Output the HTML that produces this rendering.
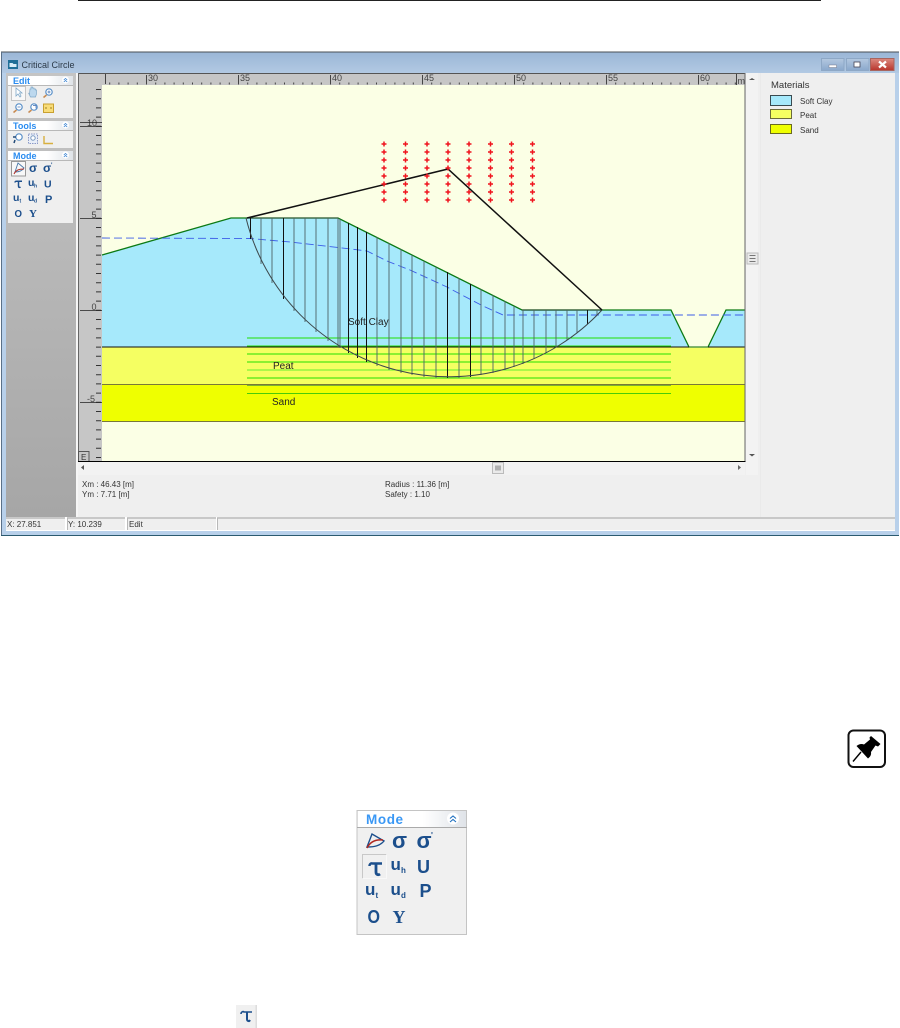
<!DOCTYPE html>
<html><head><meta charset="utf-8"><title>Critical Circle</title>
<style>
html,body{margin:0;padding:0;background:#fff;width:900px;height:1028px;overflow:hidden}
svg{display:block;font-family:"Liberation Sans",sans-serif}
.s{font-size:8px;fill:#333}
.r{font-size:9px;fill:#444}
.hd{font-weight:bold;font-size:9px;fill:#2a8cf0}
.g{font-weight:bold;fill:#1c4f8c}
.gb{font-weight:bold;fill:#1c4f8c;font-family:"Liberation Serif",serif}
</style></head><body>
<svg width="900" height="1028" viewBox="0 0 900 1028" xmlns="http://www.w3.org/2000/svg">
<defs>
<linearGradient id="tb" x1="0" y1="0" x2="0" y2="1"><stop offset="0" stop-color="#9ab6d6"/><stop offset="1" stop-color="#b2c9e3"/></linearGradient>
<linearGradient id="gp" x1="0" y1="0" x2="0" y2="1"><stop offset="0" stop-color="#c4c4c4"/><stop offset="1" stop-color="#a6a6a6"/></linearGradient>
<linearGradient id="hg" x1="0" y1="0" x2="1" y2="0"><stop offset="0" stop-color="#fff"/><stop offset=".6" stop-color="#fff"/><stop offset="1" stop-color="#dfe3e8"/></linearGradient>
<linearGradient id="cl" x1="0" y1="0" x2="0" y2="1"><stop offset="0" stop-color="#dc8a80"/><stop offset="1" stop-color="#b8352c"/></linearGradient>
<linearGradient id="bt" x1="0" y1="0" x2="0" y2="1"><stop offset="0" stop-color="#b4c8e0"/><stop offset="1" stop-color="#8aa8cc"/></linearGradient>
</defs>

<rect x="78" y="0" width="743" height="1" fill="#222"/>

<!-- window -->
<rect x="1" y="73" width="898" height="463" fill="#b8d0ea"/>
<rect x="1" y="52" width="898" height="21" fill="url(#tb)"/>
<rect x="1" y="51.500" width="898" height="1" fill="#4a4f55"/>
<rect x="1" y="52" width="1" height="484" fill="#5a7088"/>
<rect x="1" y="535" width="898" height="1" fill="#2a5a70"/>
<rect x="6" y="73" width="889" height="458" fill="#efefef"/>
<rect x="6" y="73" width="70" height="444" fill="url(#gp)"/>
<rect x="76" y="73" width="2" height="444" fill="#f6f6f6"/>

<!-- title -->
<rect x="8" y="60" width="10" height="9" fill="#1f6f98"/>
<path d="M9.500 63h3l1 1h3v3h-7z" fill="#d8eef8"/>
<text x="21.500" y="68" font-size="9" fill="#2c3a48">Critical Circle</text>
<rect x="821.500" y="58.500" width="22.500" height="12" fill="url(#bt)" stroke="#8ea8c6"/>
<rect x="829" y="65" width="7.500" height="2.500" fill="#fff" stroke="#667" stroke-width=".4"/>
<rect x="846.500" y="58.500" width="22.500" height="12" fill="url(#bt)" stroke="#8ea8c6"/>
<rect x="854" y="62" width="6" height="5" fill="#fff" stroke="#445" stroke-width=".8"/>
<rect x="870.500" y="58.500" width="23.500" height="12" fill="url(#cl)" stroke="#a8655f"/>
<path d="M879 61.500l7 6M886 61.500l-7 6" stroke="#fff" stroke-width="2.200"/>

<!-- canvas -->
<rect x="78" y="73" width="667" height="12" fill="#c6c6c6"/>
<rect x="78" y="85" width="24" height="376" fill="#c6c6c6"/>
<rect x="78" y="73" width="667" height="1" fill="#555"/>
<rect x="78" y="73" width="1" height="388" fill="#666"/>
<rect x="102" y="85" width="643" height="376" fill="#fbffe5"/>
<rect x="102" y="347" width="643" height="37.500" fill="#f5ff62"/>
<rect x="102" y="384.500" width="643" height="37" fill="#efff00"/>
<polygon points="102,255 231,218 338,218 522,310 671,310 689,347 708,347 726,310 745,310 745,347 102,347" fill="#a6e9fb"/>

<!-- rulers -->
<line x1="109" y1="83.500" x2="736" y2="83.500" stroke="#444" stroke-width="2" stroke-dasharray="1 8.2" stroke-dashoffset="-.2"/>
<line x1="98.500" y1="89" x2="98.500" y2="461" stroke="#333" stroke-width="5" stroke-dasharray="1 8.2"/>
<path d="M105.500 74v10M146.500 75v9M238.500 75v9M330.500 75v9M422.500 75v9M514.500 75v9M606.500 75v9M698.500 75v9M736.500 74v11" stroke="#444" stroke-width="1"/>
<g class="r">
<text x="148" y="81">30</text><text x="240" y="81">35</text><text x="332" y="81">40</text><text x="424" y="81">45</text><text x="516" y="81">50</text><text x="608" y="81">55</text><text x="700" y="81">60</text><text x="737.500" y="84">m</text>
<text x="87" y="126">10</text><text x="91.500" y="218">5</text><text x="91.500" y="310">0</text><text x="87" y="402">-5</text>
</g>
<path d="M80 122.500h22M80 126.500h22M80 218.500h22M80 310.500h22M80 402.500h22" stroke="#222" stroke-width=".8"/>
<rect x="78.500" y="451.500" width="10.500" height="10" fill="#c6c6c6" stroke="#555"/>
<text x="81" y="460" font-size="8" fill="#333">E</text>

<!-- green soil lines -->
<g stroke="#22e000" stroke-width="1.100">
<path d="M247 338H671M247 346H671M247 354H671M247 362H671M247 378H671"/>
<path d="M247 370H671" stroke="#62f030"/>
<path d="M247 385.500H671" stroke="#7ab030"/>
<path d="M247 393.500H671" stroke="#48cc08"/>
</g>

<!-- ground outline -->
<polyline points="102,255 231,218 338,218 522,310 671,310 689,347 708,347 726,310 745,310" fill="none" stroke="#0c7a14" stroke-width="1.300"/>
<path d="M247 218H338" stroke="#2a4a30" stroke-width="1"/>
<path d="M522 310H602" stroke="#1a3a20" stroke-width="1"/>
<path d="M102 347H689M708 347H745" stroke="#111" stroke-width=".9"/>
<path d="M689 347H708" stroke="#5a9a50" stroke-width="1.300"/>
<path d="M102 384.500H745M102 421.500H745" stroke="#787838" stroke-width=".9"/>

<!-- phreatic -->
<polyline points="102,238 250,238.500 290,242 340,247.700 367,251 387,261 410,270 447,287 460,294 483,306 503,315 745,315" fill="none" stroke="#3c5ce8" stroke-width=".9" stroke-dasharray="8 4"/>

<!-- slices -->
<g stroke="#4e6468" stroke-width=".9" fill="none">
<path d="M261 218V264M272 218V283M294 218V311M305 218V322M316 218V332M328 218V341M338 218V347M340 219V348M377 237V366M389 243V370M401 249V373M412 255V375M424 261V377M436 267V378M459 278V378M481 289V375M493 295V373M505 301V370M514 306V367M523 310V364M534 310V359M546 310V353M556 310V347M567 310V340M577 310V333M597 310V315"/>
</g>
<g stroke="#111" stroke-width="1" fill="none">
<path d="M250.500 218V239M283.500 218V299M348.500 223V353M357.500 227V358M366.500 232V362M447.500 272V378M470.500 284V377M587.500 310V324"/>
</g>
<path d="M246 218A209 209 0 0 0 602 310" fill="none" stroke="#3c484c" stroke-width="1"/>
<polyline points="247,218 448,169 602,310" fill="none" stroke="#111" stroke-width="1.500"/>

<!-- grid -->
<path stroke="#f0141e" stroke-width="1.500" fill="none" d="M384 141.500v5M381.500 144h5M384 149.500v5M381.500 152h5M384 157.500v5M381.500 160h5M384 165.500v5M381.500 168h5M384 173.500v5M381.500 176h5M384 181.500v5M381.500 184h5M384 189.500v5M381.500 192h5M384 197.500v5M381.500 200h5
M405.500 141.500v5M403 144h5M405.500 149.500v5M403 152h5M405.500 157.500v5M403 160h5M405.500 165.500v5M403 168h5M405.500 173.500v5M403 176h5M405.500 181.500v5M403 184h5M405.500 189.500v5M403 192h5M405.500 197.500v5M403 200h5
M427 141.500v5M424.500 144h5M427 149.500v5M424.500 152h5M427 157.500v5M424.500 160h5M427 165.500v5M424.500 168h5M427 173.500v5M424.500 176h5M427 181.500v5M424.500 184h5M427 189.500v5M424.500 192h5M427 197.500v5M424.500 200h5
M448 141.500v5M445.500 144h5M448 149.500v5M445.500 152h5M448 157.500v5M445.500 160h5M448 165.500v5M445.500 168h5M448 173.500v5M445.500 176h5M448 181.500v5M445.500 184h5M448 189.500v5M445.500 192h5M448 197.500v5M445.500 200h5
M469 141.500v5M466.500 144h5M469 149.500v5M466.500 152h5M469 157.500v5M466.500 160h5M469 165.500v5M466.500 168h5M469 173.500v5M466.500 176h5M469 181.500v5M466.500 184h5M469 189.500v5M466.500 192h5M469 197.500v5M466.500 200h5
M490.500 141.500v5M488 144h5M490.500 149.500v5M488 152h5M490.500 157.500v5M488 160h5M490.500 165.500v5M488 168h5M490.500 173.500v5M488 176h5M490.500 181.500v5M488 184h5M490.500 189.500v5M488 192h5M490.500 197.500v5M488 200h5
M511.500 141.500v5M509 144h5M511.500 149.500v5M509 152h5M511.500 157.500v5M509 160h5M511.500 165.500v5M509 168h5M511.500 173.500v5M509 176h5M511.500 181.500v5M509 184h5M511.500 189.500v5M509 192h5M511.500 197.500v5M509 200h5
M532.500 141.500v5M530 144h5M532.500 149.500v5M530 152h5M532.500 157.500v5M530 160h5M532.500 165.500v5M530 168h5M532.500 173.500v5M530 176h5M532.500 181.500v5M530 184h5M532.500 189.500v5M530 192h5M532.500 197.500v5M530 200h5"/>

<text x="348" y="325" font-size="10" fill="#222">Soft Clay</text>
<text x="273" y="369" font-size="10" fill="#222">Peat</text>
<text x="272" y="405" font-size="10" fill="#222">Sand</text>

<!-- canvas frame -->
<rect x="78" y="461" width="667.500" height="1" fill="#000"/>
<rect x="744.500" y="73" width="1" height="388" fill="#666"/>

<!-- scrollbars -->
<rect x="78" y="462" width="667" height="13" fill="#f2f2f2"/>
<rect x="746" y="73" width="12" height="402" fill="#f3f3f3"/>
<path d="M84 465v5l-3-2.500z" fill="#555"/><path d="M738 465v5l3-2.500z" fill="#666"/>
<path d="M749 80h6l-3-2z" fill="#555"/><path d="M749 454h6l-3 2.500z" fill="#555"/>
<rect x="492.500" y="462.500" width="11" height="11" fill="#eaeaea" stroke="#bbb"/>
<path d="M496 465.500v5M498 465.500v5M500 465.500v5" stroke="#777"/>
<rect x="747" y="253" width="11" height="11" fill="#eaeaea" stroke="#bbb"/>
<path d="M749.500 255.500h6M749.500 258.500h6M749.500 261.500h6" stroke="#777"/>
<rect x="760" y="73" width="1" height="444" fill="#eaeaea"/>

<!-- info text -->
<g class="s">
<text x="82" y="487">Xm : 46.43 [m]</text><text x="82" y="497">Ym : 7.71 [m]</text>
<text x="385" y="487">Radius : 11.36 [m]</text><text x="385" y="497">Safety : 1.10</text>
</g>

<!-- materials -->
<text x="771" y="88" font-size="9.500" fill="#333">Materials</text>
<rect x="770.500" y="95.500" width="21" height="10" fill="#a6e9fb" stroke="#3a4a50"/>
<rect x="770.500" y="109.500" width="21" height="9" fill="#f5ff62" stroke="#6a6a3a"/>
<rect x="770.500" y="124.500" width="21" height="9" fill="#efff00" stroke="#6a6a20"/>
<g class="s"><text x="800" y="104">Soft Clay</text><text x="800" y="118">Peat</text><text x="800" y="133">Sand</text></g>

<!-- status bar -->
<rect x="6" y="517.500" width="889" height="1" fill="#a0a0a0"/>
<rect x="65" y="517" width="2" height="14" fill="#fff"/>
<rect x="125" y="517" width="2" height="14" fill="#fff"/>
<rect x="216" y="517" width="1" height="14" fill="#fff"/>
<path d="M67.500 518v12M127.500 518v12M217.500 518v12" stroke="#b8b8b8"/>
<rect x="6" y="530" width="889" height="1" fill="#fff"/>
<g class="s"><text x="7" y="527">X: 27.851</text><text x="68" y="527">Y: 10.239</text><text x="129" y="527">Edit</text></g>

<!-- Edit card -->
<rect x="8" y="76" width="65" height="42" fill="#efefef"/>
<rect x="8" y="76" width="65" height="9" fill="url(#hg)"/><rect x="8" y="85" width="65" height=".8" fill="#aaa"/>
<text x="13" y="84" class="hd">Edit</text>
<circle cx="65.500" cy="80" r="3.500" fill="#fff"/><path d="M63.800 80l1.700-1.500 1.700 1.500M63.800 82l1.700-1.500 1.700 1.500" stroke="#2a7ad0" stroke-width=".7" fill="none"/>
<rect x="11.500" y="86.500" width="14" height="14" fill="#f8f8f8" stroke="#c4c4c4"/>
<path d="M16 88v8l2-2 2 3 1-1-1.500-3h2.500z" fill="#fff" stroke="#7fa8c8" stroke-width=".8"/>
<path d="M28.500 93l1 1 .5-5h1v-2h1.500v1h1.500v1h1.500v1h1v4l-1 3h-5z" fill="#bcd8ee" stroke="#7fa8c8" stroke-width=".7"/>
<circle cx="49" cy="92" r="3.200" fill="#fff" stroke="#5a90c8" stroke-width="1.200"/><path d="M46.500 95l-3 2.500" stroke="#c88a50" stroke-width="1.500"/><path d="M47.500 92h3M49 90.500v3" stroke="#3a6ab0" stroke-width=".7"/>
<circle cx="19" cy="107" r="3.200" fill="#fff" stroke="#5a90c8" stroke-width="1.200"/><path d="M16.500 110l-3 2.500" stroke="#c88a50" stroke-width="1.500"/><path d="M17.500 107h3" stroke="#3a6ab0" stroke-width=".7"/>
<circle cx="34" cy="107" r="3.200" fill="#fff" stroke="#5a90c8" stroke-width="1.200"/><path d="M31.500 110l-3 2.500" stroke="#c88a50" stroke-width="1.500"/><path d="M33 105.500h3v3" stroke="#3a6ab0" stroke-width=".7" fill="none"/>
<rect x="43.500" y="104" width="10" height="8.500" fill="#f8dc78" stroke="#c8a030"/><path d="M45 108h2M50 108h2" stroke="#a08020"/>

<!-- Tools card -->
<rect x="8" y="121" width="65" height="27" fill="#efefef"/>
<rect x="8" y="121" width="65" height="9" fill="url(#hg)"/><rect x="8" y="130" width="65" height=".8" fill="#aaa"/>
<text x="13" y="129" class="hd">Tools</text>
<circle cx="65.500" cy="125" r="3.500" fill="#fff"/><path d="M63.800 125l1.700-1.500 1.700 1.500M63.800 127l1.700-1.500 1.700 1.500" stroke="#2a7ad0" stroke-width=".7" fill="none"/>
<circle cx="19" cy="137" r="3.200" fill="#fff" stroke="#5a90c8" stroke-width="1.200"/><path d="M13 137h3M15 140l-1 3" stroke="#224a78" stroke-width="1.500"/>
<rect x="28.500" y="134" width="9" height="9.500" fill="#e8eef8" stroke="#8a9ac8" stroke-dasharray="1.500 1"/><circle cx="33" cy="138" r="2.200" fill="#fff" stroke="#7a9ac0"/>
<path d="M44 136v7.500h9" fill="none" stroke="#d8b040" stroke-width="1.400"/>

<!-- Mode card -->
<rect x="8" y="151" width="65" height="72" fill="#efefef"/>
<rect x="8" y="151" width="65" height="9" fill="url(#hg)"/><rect x="8" y="160" width="65" height=".8" fill="#aaa"/>
<text x="13" y="159" class="hd">Mode</text>
<circle cx="65.500" cy="155" r="3.500" fill="#fff"/><path d="M63.800 155l1.700-1.500 1.700 1.500M63.800 157l1.700-1.500 1.700 1.500" stroke="#2a7ad0" stroke-width=".7" fill="none"/>
<rect x="11.500" y="161.500" width="14" height="14.500" fill="#f8f8f8" stroke="#999"/>
<path d="M15 172l3-9 6 5c-2 3-5 4-9 4z" fill="none" stroke="#4a78a8" stroke-width=".9"/><path d="M14 174c2-4 5-5 10-5" fill="none" stroke="#b03028" stroke-width="1"/>
<text x="29" y="172" class="g" font-size="12">σ</text>
<text x="43" y="172" class="g" font-size="12">σ</text><text x="51" y="167" class="g" font-size="6">'</text>
<path d="M15 182.500c0-1 1-1.500 2-1.200h5M18.500 181.500v4.500c0 1.500 1 1.700 2 1" fill="none" stroke="#1c4f8c" stroke-width="1.500"/>
<text x="28" y="186" class="g" font-size="10.500">u</text><text x="34" y="187.500" class="g" font-size="5">h</text>
<text x="44" y="187.500" class="g" font-size="10.500">U</text>
<text x="13" y="201" class="g" font-size="10.500">u</text><text x="19.500" y="202.500" class="g" font-size="5">t</text>
<text x="28" y="201" class="g" font-size="10.500">u</text><text x="34" y="202.500" class="g" font-size="5">d</text>
<text x="45" y="203" class="g" font-size="11">P</text>
<text x="14.500" y="217" class="g" font-size="10.500" textLength="7.500" lengthAdjust="spacingAndGlyphs">O</text>
<text x="29" y="217" class="gb" font-size="11">Y</text>

<!-- Large Mode panel -->
<rect x="357" y="810.500" width="109.500" height="124" fill="#f0f0f0" stroke="#c4c4c4"/>
<rect x="358" y="811" width="108" height="16" fill="url(#hg)"/>
<rect x="357" y="827" width="110" height="1" fill="#aaa"/>
<text x="366" y="824" font-size="13.500" font-weight="bold" fill="#3a98f5" letter-spacing=".6">Mode</text>
<circle cx="453" cy="818.500" r="6" fill="#fff"/><path d="M450 818.500l3-2.500 3 2.500M450 822l3-2.500 3 2.500" stroke="#1f70c0" stroke-width="1.100" fill="none"/>
<path d="M367 847l5-13 12 7c-4 5-10 6-17 6z" fill="none" stroke="#1c4f8c" stroke-width="1.400"/><path d="M367 848c3-6 8-9 16-8" fill="none" stroke="#b02820" stroke-width="1.500"/>
<text x="392" y="848" class="g" font-size="22">σ</text>
<text x="416.500" y="848" class="g" font-size="22">σ</text><text x="431" y="838" class="g" font-size="8">'</text>
<path d="M362.500 878.500v-24h24" fill="none" stroke="#c8c8c8"/><path d="M386.500 854.500v24h-24" fill="none" stroke="#f8f8f8"/>
<path d="M369.500 866c0-2 1.500-3 3-2.500h9.500" fill="none" stroke="#1c4f8c" stroke-width="2.400"/><path d="M376 863.500v8.500c0 2.500 2 3.500 4 2" fill="none" stroke="#1c4f8c" stroke-width="2.800"/>
<text x="390.500" y="870" class="g" font-size="17">u</text><text x="401" y="873" class="g" font-size="8">h</text>
<text x="417" y="873" class="g" font-size="18">U</text>
<text x="365" y="895" class="g" font-size="17">u</text><text x="375.500" y="898" class="g" font-size="8">t</text>
<text x="390.500" y="895" class="g" font-size="17">u</text><text x="401" y="898" class="g" font-size="8">d</text>
<text x="419.500" y="897" class="g" font-size="18">P</text>
<text x="367.500" y="923" class="g" font-size="18" textLength="12.500" lengthAdjust="spacingAndGlyphs">O</text>
<text x="392.500" y="923" class="gb" font-size="18">Y</text>

<!-- Pin icon -->
<rect x="848.500" y="730.500" width="36.500" height="36.500" rx="5" fill="#fff" stroke="#111" stroke-width="2"/>
<path d="M871 736L880.500 744L878 746.500L875.500 745.500L871 752C871.500 755 870 757 868 758.500L856.500 746C859 744 861.500 743.500 864 744.500L870 739.500L869.500 737.500Z" fill="#000"/>
<path d="M861 752L853 761.500" stroke="#000" stroke-width="1.400"/>

<!-- Tau inline -->
<rect x="236" y="1005" width="21" height="23" fill="#f0f0f0"/>
<rect x="255.500" y="1005" width="1.500" height="23" fill="#ddd"/>
<path d="M241 1014c0-2 2-3 3-2h8" fill="none" stroke="#1c4f8c" stroke-width="1.600"/><path d="M247 1012v7c0 2 2 3 3 1" fill="none" stroke="#1c4f8c" stroke-width="2"/>
</svg>
</body></html>
